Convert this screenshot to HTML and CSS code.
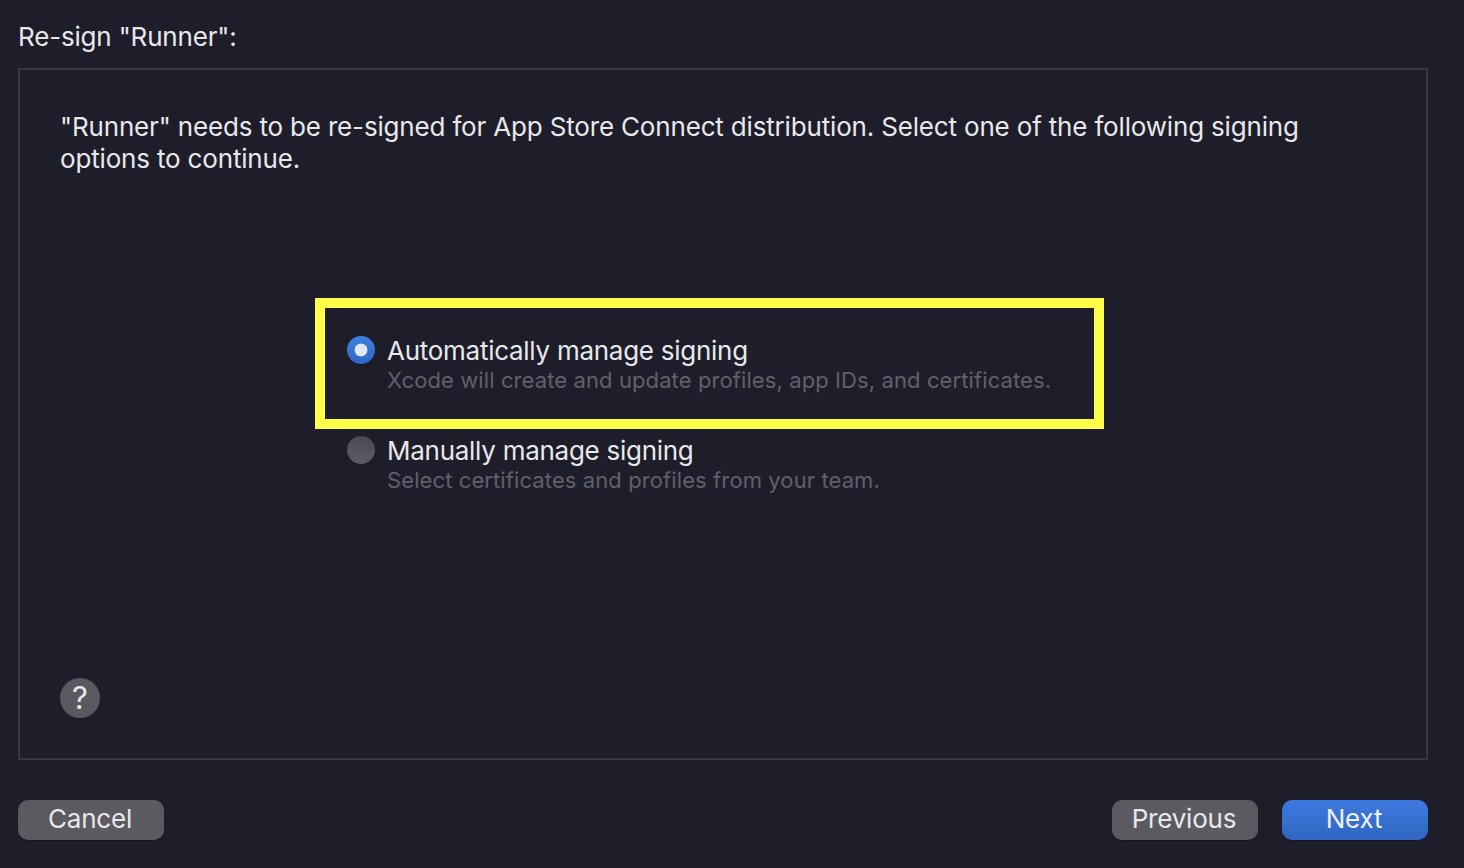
FILE: index.html
```html
<!DOCTYPE html>
<html lang="en">
<head>
  <meta charset="UTF-8" />
  <title>Re-sign Runner</title>
  <link rel="stylesheet" href="styles.css">
</head>
<body>
  <div class="sheet">
    <h2 class="sheet-title">Re-sign "Runner":</h2>

    <div class="panel">
      <p class="intro">"Runner" needs to be re-signed for App Store Connect distribution. Select one of the following signing options to continue.</p>

      <!-- Signing options -->
      <div class="options">
        <div class="highlight"></div>
        <div class="option">
          <span class="radio radio-on"></span>
          <div>
            <div class="option-name">Automatically manage signing</div>
            <div class="option-desc">Xcode will create and update profiles, app IDs, and certificates.</div>
          </div>
        </div>
        <div class="option">
          <span class="radio"></span>
          <div>
            <div class="option-name">Manually manage signing</div>
            <div class="option-desc">Select certificates and profiles from your team.</div>
          </div>
        </div>
      </div>

      <div class="help">?</div>
    </div>

    <div class="footer">
      <button class="btn" type="button">Cancel</button>
      <div class="footer-right">
        <button class="btn" type="button">Previous</button>
        <button class="btn btn-primary" type="button">Next</button>
      </div>
    </div>
  </div>
</body>
</html>
```

FILE: styles.css
```css
body {
  font-family: Inter, "Liberation Sans", sans-serif;
  background: #1e1e2a;
  color: #e8e8ea;
  margin: 0;
  padding: 0;
  height: 868px;
  overflow: hidden;
}

.sheet {
  width: 1410px;
  margin-left: 18px;
}

.sheet-title {
  margin: 0;
  height: 68px;
  padding-top: 21px;
  box-sizing: border-box;
  font-size: 26px;
  line-height: 32px;
  font-weight: 400;
  letter-spacing: -0.18px;
}

.panel {
  box-sizing: border-box;
  height: 692px;
  border: 2px solid #38383f;
  padding: 41px 40px 0;
  display: flex;
  flex-direction: column;
}

.intro {
  margin: 0;
  width: 1290px;
  font-size: 26px;
  line-height: 32px;
  letter-spacing: -0.17px;
}

.options {
  position: relative;
  margin: 161px 0 0 287px;
  width: 720px;
  display: flex;
  flex-direction: column;
  gap: 41px;
}

.highlight {
  position: absolute;
  left: -32px;
  top: -38px;
  width: 789px;
  height: 131px;
  box-sizing: border-box;
  border: 10px solid #fffd4a;
}

.option {
  display: flex;
  gap: 12px;
}

.radio {
  flex: none;
  width: 28px;
  height: 28px;
  box-sizing: border-box;
  border-radius: 50%;
  background: linear-gradient(#4a4a54, #5c5c64);
  box-shadow: 0 1px 1px rgba(0, 0, 0, 0.3);
}

.radio-on {
  background: radial-gradient(circle, #dfe8fa 0, #dfe8fa 6px, transparent 6.8px), linear-gradient(#3f7fe0, #2f66c4);
}

.option-name {
  font-size: 26px;
  line-height: 30px;
  letter-spacing: -0.27px;
}

.option-desc {
  margin-top: -1px;
  color: #60606a;
  font-size: 22px;
  line-height: 30px;
  letter-spacing: 0.1px;
}

.help {
  width: 40px;
  height: 40px;
  margin-top: 183px;
  border-radius: 50%;
  background: #59595f;
  color: #e8e8ea;
  font-size: 31px;
  line-height: 40px;
  text-align: center;
}

.footer {
  margin-top: 40px;
  display: flex;
  justify-content: space-between;
}

.footer-right {
  display: flex;
  gap: 24px;
}

.btn {
  width: 146px;
  height: 40px;
  padding: 0 2px 4px 0;
  border: none;
  border-radius: 10px;
  background: #5a5a60;
  color: #e8e8ea;
  font-family: inherit;
  font-size: 26px;
  letter-spacing: -0.2px;
  box-shadow: 0 1px 1px rgba(0, 0, 0, 0.3);
}

.btn-primary {
  background: linear-gradient(#3d7ae0, #2f66c0);
  color: #eef2fb;
}
```
